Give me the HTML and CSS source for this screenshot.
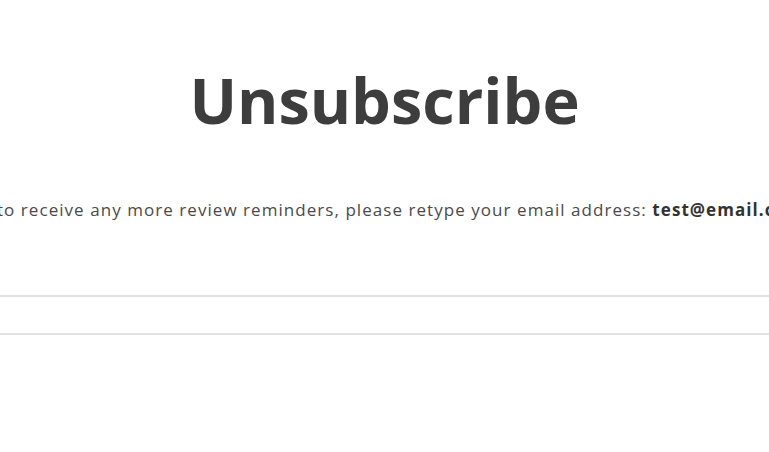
FILE: index.html
```html
<!DOCTYPE html>
<html lang="en">
<head>
  <meta charset="UTF-8">
  <title>Unsubscribe</title>
  <link rel="stylesheet" href="styles.css">
</head>
<body>
  <div class="page">
    <h1 class="title">Unsubscribe</h1>
    <form class="unsub-form">
      <p class="intro">If you do not wish to receive any more review reminders, please retype your email address: <strong>test@email.com</strong></p>
      <input type="email" class="email-input" name="email">
    </form>
  </div>
</body>
</html>
```

FILE: styles.css
```css
html, body {
  margin: 0;
  padding: 0;
  background: #fff;
  overflow: hidden;
}

body {
  font-family: 'Open Sans', 'Liberation Sans', sans-serif;
  color: #444;
}

.page {
  display: flex;
  flex-direction: column;
  align-items: center;
  padding-top: 62px;
}

.title {
  margin: 0;
  font-size: 63px;
  font-weight: 700;
  color: #3d3d3d;
  line-height: 76px;
}

.unsub-form {
  width: 100%;
  display: flex;
  flex-direction: column;
  align-items: center;
  margin-top: 60px;
}

/* the sentence is wider than the window and gets cut on both sides */
.intro {
  align-self: flex-start;
  margin: 0 0 0 -168px;
  white-space: nowrap;
  font-size: 17px;
  line-height: 24px;
  letter-spacing: 1.05px;
  color: #4a4a4a;
}

.intro strong {
  color: #333;
}

.email-input {
  box-sizing: border-box;
  margin-top: 73px;
  width: 900px;
  height: 40px;
  border: 1px solid #e2e2e2;
  border-width: 2px 1px;
  background: #fff;
}
```
